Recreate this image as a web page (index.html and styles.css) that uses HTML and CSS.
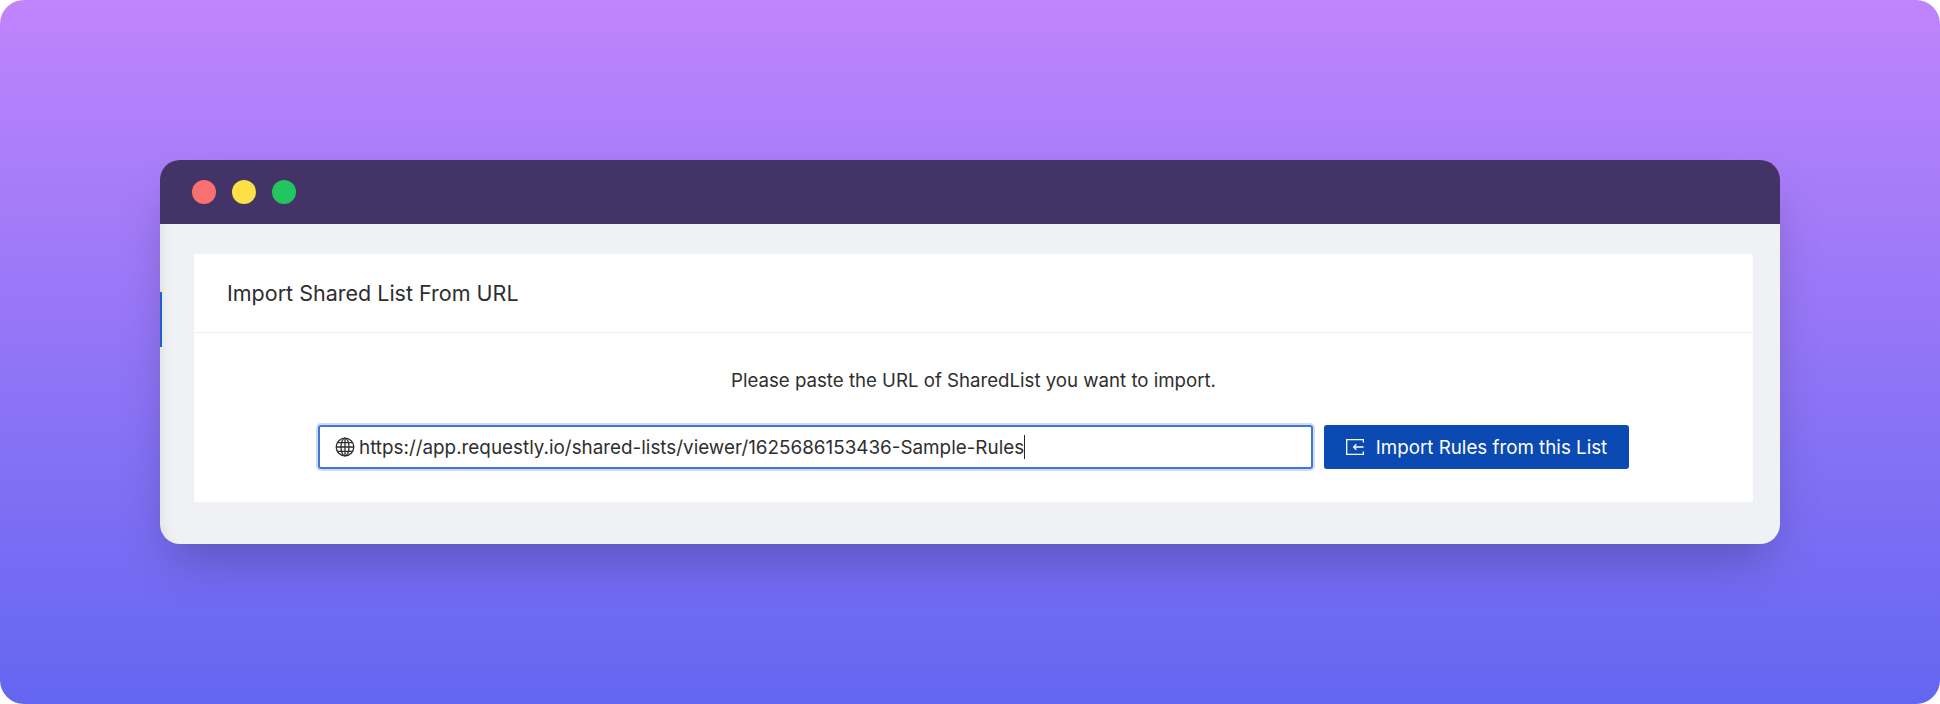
FILE: index.html
```html
<!DOCTYPE html>
<html lang="en">
<head>
  <meta charset="UTF-8" />
  <meta name="viewport" content="width=device-width, initial-scale=1.0"/>
  <title>Import Shared List</title>
  <link rel="stylesheet" href="styles.css">
</head>
<body>
  <div class="backdrop">
    <div class="window">
      <div class="titlebar">
        <span class="dot dot-red"></span>
        <span class="dot dot-yellow"></span>
        <span class="dot dot-green"></span>
      </div>
      <div class="content">
        <span class="side-marker"></span>
        <div class="card">
          <div class="card-header">Import Shared List From URL</div>
          <div class="card-body">
            <p class="message">Please paste the URL of SharedList you want to import.</p>
            <div class="import-row">
              <div class="url-input">
                <svg class="globe" viewBox="0 0 20 20" fill="none" stroke="currentColor" stroke-width="1.3">
                  <circle cx="10" cy="10" r="8.8"/>
                  <ellipse cx="10" cy="10" rx="4" ry="8.8"/>
                  <path d="M10 1.2v17.6M1.2 10h17.6M2.4 5.6h15.2M2.4 14.4h15.2"/>
                </svg>
                <span class="url-text">https://app.requestly.io/shared-lists/viewer/1625686153436-Sample-Rules</span><span class="caret"></span>
              </div>
              <button class="import-btn">
                <svg class="import-icon" viewBox="0 0 18 16" fill="none" stroke="currentColor" stroke-width="1.3">
                  <path d="M17.4 3.6V.7H.7v14.6h16.7v-2.9"/>
                  <path d="M17.6 8H7.6M10.4 5.2L7.6 8l2.8 2.8"/>
                </svg>
                Import Rules from this List
              </button>
            </div>
          </div>
        </div>
      </div>
    </div>
  </div>
</body>
</html>
```

FILE: styles.css
```css
/* Page and gradient backdrop */
body {
  margin: 0;
  background: #fff;
  font-family: Inter, "Liberation Sans", sans-serif;
}

.backdrop {
  height: 704px;
  box-sizing: border-box;
  padding: 160px;
  border-radius: 24px;
  background: linear-gradient(180deg, #c084fc 0%, #6366f1 100%);
}

/* Browser window */
.window {
  height: 384px;
  display: flex;
  flex-direction: column;
  border-radius: 20px;
  box-shadow: 0 25px 50px -12px rgba(0, 0, 0, 0.25);
}

.titlebar {
  height: 64px;
  flex: none;
  display: flex;
  align-items: center;
  gap: 16px;
  padding-left: 32px;
  background: #433366;
  border-radius: 20px 20px 0 0;
}

.dot {
  width: 24px;
  height: 24px;
  border-radius: 50%;
}

.dot-red { background: #f87171; }
.dot-yellow { background: #fde047; }
.dot-green { background: #22c55e; }

.content {
  position: relative;
  flex: 1;
  padding: 30px 27px 42px 34px;
  background: #f0f1f5;
  border-radius: 0 0 20px 20px;
  box-shadow: inset 14px 0 10px -10px rgba(0, 0, 0, 0.06);
}

.side-marker {
  position: absolute;
  left: 0;
  top: 68px;
  width: 2px;
  height: 55px;
  background: #1d5fd0;
}

/* Card */
.card {
  background: #fff;
  border-radius: 2px;
}

.card-header {
  height: 79px;
  box-sizing: border-box;
  display: flex;
  align-items: center;
  padding-left: 33px;
  border-bottom: 1px solid #f0f0f0;
  font-size: 21.5px;
  color: #2e2e2e;
}

.card-body {
  padding: 31px 0 33px;
  text-align: center;
}

.message {
  margin: 0 0 29px;
  font-size: 18.65px;
  line-height: 32px;
  color: #2e2e2e;
}

.import-row {
  display: flex;
  justify-content: center;
  gap: 11px;
}

.url-input {
  width: 995px;
  height: 44px;
  box-sizing: border-box;
  display: flex;
  align-items: center;
  padding-left: 15px;
  border: 2px solid #3f78d0;
  border-radius: 3px;
  box-shadow: 0 0 0 2px #d0dcf3;
  font-size: 18.85px;
  color: #2e2e2e;
}

.globe {
  width: 20px;
  height: 20px;
  margin-right: 4px;
  flex: none;
}

.caret {
  width: 1px;
  height: 24px;
  background: #262626;
}

.import-btn {
  width: 305px;
  height: 44px;
  display: flex;
  align-items: center;
  justify-content: center;
  gap: 12px;
  padding: 0;
  border: none;
  border-radius: 3px;
  background: #0b4ab2;
  box-shadow: 0 2px 0 rgba(0, 0, 0, 0.02);
  font-family: inherit;
  font-size: 18.75px;
  color: #fff;
}

.import-icon {
  width: 18px;
  height: 16px;
  flex: none;
}
```
